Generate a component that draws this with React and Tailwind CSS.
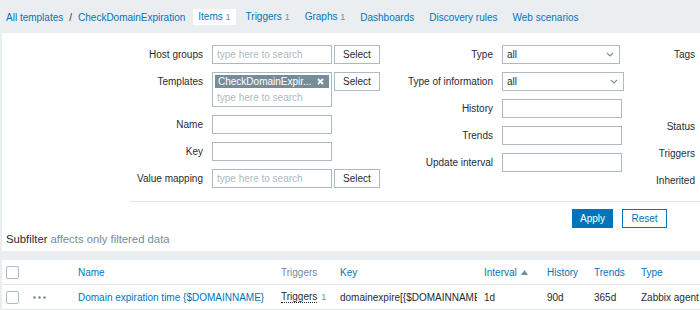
import React from 'react';

const link = 'text-[#0275b8]';

const TextBox = ({ w = 'w-[120px]', placeholder }) => (
  <input
    readOnly
    placeholder={placeholder}
    className={`${w} h-[19px] border border-[#acbbc2] bg-white px-[4px] text-[10px] outline-none placeholder:text-[#acbbc2]`}
  />
);

const SelectBtn = () => (
  <button className="ml-[2px] h-[19px] w-[46px] border border-[#acbbc2] bg-white text-[#1f2c33]">
    Select
  </button>
);

const Dropdown = ({ w }) => (
  <div className={`${w} h-[19px] border border-[#acbbc2] bg-white pl-[4px] pr-[5px] flex items-center justify-between`}>
    <span>all</span>
    <svg width="8" height="5" viewBox="0 0 8 5" fill="none" stroke="#768d99" strokeWidth="1.1">
      <path d="M1 1l3 3 3-3" />
    </svg>
  </div>
);

const Label = ({ w, children, top }) => (
  <div className={`${w} shrink-0 text-right ${top ? 'h-[19px] leading-[19px]' : ''}`}>{children}</div>
);

const Checkbox = () => (
  <div className="w-[13px] h-[13px] border border-[#acbbc2] bg-white rounded-[2px]" />
);

const cols = 'grid grid-cols-[27px_45px_203px_59px_144px_63px_47px_47px_auto] items-center pl-[4px]';

export default function App() {
  return (
    <div className="w-[700px] h-[310px] overflow-hidden bg-[#ebeef0] text-[10px] text-[#1f2c33] font-['Liberation_Sans',Arial,sans-serif]">
      {/* Header: breadcrumbs + tabs */}
      <div className="h-[33px] flex items-center pl-[6px] pt-[1px] whitespace-nowrap">
        <span className={link}>All templates</span>
        <span className="mx-[6px] text-[#1f2c33]">/</span>
        <span className={link}>CheckDomainExpiration</span>
        <div className="ml-[8px] flex items-center gap-[5px]">
          <span className="bg-white px-[5px] h-[16px] leading-[16px] text-[#0275b8]">
            Items <span className="text-[9px] text-[#768d99]">1</span>
          </span>
          <span className={`px-[5px] ${link}`}>
            Triggers <span className="text-[9px] text-[#768d99]">1</span>
          </span>
          <span className={`px-[5px] ${link}`}>
            Graphs <span className="text-[9px] text-[#768d99]">1</span>
          </span>
          <span className={`px-[5px] ${link}`}>Dashboards</span>
          <span className={`px-[5px] ${link}`}>Discovery rules</span>
          <span className={`px-[5px] ${link}`}>Web scenarios</span>
        </div>
      </div>

      {/* Filter */}
      <div className="ml-[2px] bg-white pt-[12px]">
        <div className="flex whitespace-nowrap">
          <div className="w-[378px] flex flex-col gap-2">
            <div className="flex items-center">
              <Label w="w-[201px]">Host groups</Label>
              <div className="ml-[9px]"><TextBox placeholder="type here to search" /></div>
              <SelectBtn />
            </div>
            <div className="flex items-start">
              <Label w="w-[201px]" top>Templates</Label>
              <div className="ml-[9px] w-[120px] h-[35px] border border-[#acbbc2] p-[2px]">
                <div className="h-[13px] bg-[#768d99] text-white flex items-center justify-between pl-[3px] pr-[5px]">
                  <span>CheckDomainExpir...</span>
                  <svg width="7" height="7" viewBox="0 0 7 7" stroke="white" strokeWidth="1.8">
                    <path d="M1 1l5 5M6 1l-5 5" />
                  </svg>
                </div>
                <div className="pl-[2px] pt-[2px] text-[#acbbc2]">type here to search</div>
              </div>
              <SelectBtn />
            </div>
            <div className="flex items-center">
              <Label w="w-[201px]">Name</Label>
              <div className="ml-[9px]"><TextBox /></div>
            </div>
            <div className="flex items-center">
              <Label w="w-[201px]">Key</Label>
              <div className="ml-[9px]"><TextBox /></div>
            </div>
            <div className="flex items-center">
              <Label w="w-[201px]">Value mapping</Label>
              <div className="ml-[9px]"><TextBox placeholder="type here to search" /></div>
              <SelectBtn />
            </div>
          </div>

          <div className="w-[244px] flex flex-col gap-2">
            <div className="flex items-center">
              <Label w="w-[113px]">Type</Label>
              <div className="ml-[9px]"><Dropdown w="w-[118px]" /></div>
            </div>
            <div className="flex items-center">
              <Label w="w-[113px]">Type of information</Label>
              <div className="ml-[9px]"><Dropdown w="w-[122px]" /></div>
            </div>
            <div className="flex items-center">
              <Label w="w-[113px]">History</Label>
              <div className="ml-[9px]"><TextBox /></div>
            </div>
            <div className="flex items-center">
              <Label w="w-[113px]">Trends</Label>
              <div className="ml-[9px]"><TextBox /></div>
            </div>
            <div className="flex items-center">
              <Label w="w-[113px]">Update interval</Label>
              <div className="ml-[9px]"><TextBox /></div>
            </div>
          </div>

          <div className="w-[71px] flex flex-col text-right">
            <div className="h-[19px] leading-[19px]">Tags</div>
            <div className="h-[19px] leading-[19px] mt-[53px]">Status</div>
            <div className="h-[19px] leading-[19px] mt-[8px]">Triggers</div>
            <div className="h-[19px] leading-[19px] mt-[8px]">Inherited</div>
          </div>
        </div>

        <div className="mt-[11px] ml-[128px] border-t border-[#dfe4e7]" />

        <div className="pt-[7px] pl-[570px] flex gap-[9px]">
          <button className="h-[19px] w-[41px] bg-[#0275b8] border border-[#0275b8] text-white">Apply</button>
          <button className="h-[19px] w-[45px] bg-white border border-[#0275b8] text-[#0275b8]">Reset</button>
        </div>

        <div className="h-[23px] flex items-center pl-[4px] text-[11.3px]">
          <span>Subfilter</span>
          <span className="ml-[3px] text-[#768d99]">affects only filtered data</span>
        </div>
      </div>

      {/* Items table */}
      <div className="mt-[9px] ml-[2px] bg-white whitespace-nowrap">
        <div className={`${cols} h-[25px] border-b border-[#dfe4e7]`}>
          <Checkbox />
          <span />
          <span className={link}>Name</span>
          <span className="text-[#768d99]">Triggers</span>
          <span className={link}>Key</span>
          <span className={`${link} flex items-center gap-[4px]`}>
            Interval
            <svg width="7" height="5" viewBox="0 0 7 5"><path d="M0 5L3.5 0 7 5z" fill="#768d99" /></svg>
          </span>
          <span className={link}>History</span>
          <span className={link}>Trends</span>
          <span className={link}>Type</span>
        </div>
        <div className={`${cols} h-[25px] border-b border-[#dfe4e7]`}>
          <Checkbox />
          <svg width="13" height="3" viewBox="0 0 13 3" fill="#768d99">
            <circle cx="1.5" cy="1.5" r="1.3" />
            <circle cx="6.5" cy="1.5" r="1.3" />
            <circle cx="11.5" cy="1.5" r="1.3" />
          </svg>
          <span className={link}>Domain expiration time {'{$DOMAINNAME}'}</span>
          <span>
            <span className="border-b border-dotted border-[#1f2c33]">Triggers</span>
            <span className="ml-[4px] text-[9px] text-[#768d99]">1</span>
          </span>
          <span className="w-[137px] overflow-hidden">domainexpire[{'{$DOMAINNAME}'}]</span>
          <span>1d</span>
          <span>90d</span>
          <span>365d</span>
          <span>Zabbix agent</span>
        </div>
      </div>
    </div>
  );
}
